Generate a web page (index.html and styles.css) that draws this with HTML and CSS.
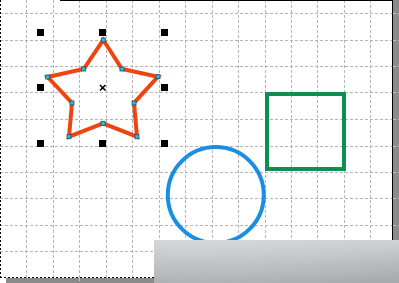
FILE: index.html
```html
<!DOCTYPE html>
<html>
<head>
<meta charset="utf-8">
<link rel="stylesheet" href="styles.css">
</head>
<body>
<div class="stage">
  <svg class="canvas" width="399" height="283" viewBox="0 0 399 283">
    <rect class="paper" x="0" y="0" width="393" height="278"/>
    <g class="grid">
      <line x1="26.5" y1="0" x2="26.5" y2="278"/>
      <line x1="53.5" y1="0" x2="53.5" y2="278"/>
      <line x1="79.5" y1="0" x2="79.5" y2="278"/>
      <line x1="106.5" y1="0" x2="106.5" y2="278"/>
      <line x1="132.5" y1="0" x2="132.5" y2="278"/>
      <line x1="159.5" y1="0" x2="159.5" y2="278"/>
      <line x1="185.5" y1="0" x2="185.5" y2="278"/>
      <line x1="212.5" y1="0" x2="212.5" y2="278"/>
      <line x1="238.5" y1="0" x2="238.5" y2="278"/>
      <line x1="265.5" y1="0" x2="265.5" y2="278"/>
      <line x1="291.5" y1="0" x2="291.5" y2="278"/>
      <line x1="317.5" y1="0" x2="317.5" y2="278"/>
      <line x1="344.5" y1="0" x2="344.5" y2="278"/>
      <line x1="370.5" y1="0" x2="370.5" y2="278"/>
      <line x1="0" y1="13.5" x2="393" y2="13.5"/>
      <line x1="0" y1="40.5" x2="393" y2="40.5"/>
      <line x1="0" y1="66.5" x2="393" y2="66.5"/>
      <line x1="0" y1="92.5" x2="393" y2="92.5"/>
      <line x1="0" y1="119.5" x2="393" y2="119.5"/>
      <line x1="0" y1="146.5" x2="393" y2="146.5"/>
      <line x1="0" y1="172.5" x2="393" y2="172.5"/>
      <line x1="0" y1="198.5" x2="393" y2="198.5"/>
      <line x1="0" y1="225.5" x2="393" y2="225.5"/>
      <line x1="0" y1="251.5" x2="393" y2="251.5"/>
    </g>
    <rect class="shadow" x="393" y="0" width="6" height="283"/>
    <rect class="shadow" x="6" y="278" width="393" height="5"/>
    <g class="ticks">
      <line x1="393" y1="13.5" x2="399" y2="13.5"/>
      <line x1="393" y1="40.5" x2="399" y2="40.5"/>
      <line x1="393" y1="66.5" x2="399" y2="66.5"/>
      <line x1="393" y1="92.5" x2="399" y2="92.5"/>
      <line x1="393" y1="119.5" x2="399" y2="119.5"/>
      <line x1="393" y1="146.5" x2="399" y2="146.5"/>
      <line x1="393" y1="172.5" x2="399" y2="172.5"/>
      <line x1="393" y1="198.5" x2="399" y2="198.5"/>
      <line x1="393" y1="225.5" x2="399" y2="225.5"/>
      <line x1="79.5" y1="278" x2="79.5" y2="283"/>
    </g>
    <line class="edge-solid" x1="60" y1="0.5" x2="392.5" y2="0.5"/>
    <line class="edge-solid" x1="392.5" y1="0" x2="392.5" y2="278"/>
    <line class="edge-dash" x1="0.5" y1="0" x2="0.5" y2="278"/>
    <line class="edge-dash" x1="0" y1="277.5" x2="393" y2="277.5"/>

    <rect class="square" x="267" y="94" width="77" height="75"/>
    <circle class="circle" cx="215.8" cy="195" r="48"/>

    <polygon class="star" points="103.3,40 122,69 158,76.7 134,103 137,136.7 103,123.3 69,136.7 72,103 47.7,77 83.7,69"/>
    <g class="nodes">
      <rect x="101.3" y="38" width="4" height="4"/>
      <rect x="120" y="67" width="4" height="4"/>
      <rect x="156" y="74.7" width="4" height="4"/>
      <rect x="132" y="101" width="4" height="4"/>
      <rect x="135" y="134.7" width="4" height="4"/>
      <rect x="101" y="121.3" width="4" height="4"/>
      <rect x="67" y="134.7" width="4" height="4"/>
      <rect x="70" y="101" width="4" height="4"/>
      <rect x="45.7" y="75" width="4" height="4"/>
      <rect x="81.7" y="67" width="4" height="4"/>
    </g>
    <g class="handles">
      <rect x="37" y="29" width="7" height="7"/>
      <rect x="99" y="29" width="7" height="7"/>
      <rect x="161" y="29" width="7" height="7"/>
      <rect x="37" y="84" width="7" height="7"/>
      <rect x="161" y="84" width="7" height="7"/>
      <rect x="37" y="140" width="7" height="7"/>
      <rect x="99" y="140" width="7" height="7"/>
      <rect x="161" y="140" width="7" height="7"/>
    </g>
    <g class="center">
      <line x1="100" y1="85" x2="105.5" y2="90.5"/>
      <line x1="105.5" y1="85" x2="100" y2="90.5"/>
    </g>
  </svg>
  <div class="overlay"></div>
</div>
</body>
</html>
```
FILE: styles.css
```css
html, body {
  margin: 0;
  padding: 0;
  background: #ffffff;
  font-family: "Liberation Sans", Arial, sans-serif;
}
.stage {
  position: relative;
  width: 399px;
  height: 283px;
  overflow: hidden;
  background: #ffffff;
}
.canvas {
  display: block;
}
.paper {
  fill: #ffffff;
}
.grid line {
  stroke: #b4b4b4;
  stroke-width: 1;
  stroke-dasharray: 3 2;
}
.shadow {
  fill: #8a8a8a;
}
.ticks line {
  stroke: #c8c8c8;
  stroke-width: 1;
  stroke-dasharray: 3 2;
}
.edge-solid {
  stroke: #000000;
  stroke-width: 1;
}
.edge-dash {
  stroke: #000000;
  stroke-width: 1;
  stroke-dasharray: 2 2;
}
.square {
  fill: none;
  stroke: #0d8f4f;
  stroke-width: 4;
}
.circle {
  fill: none;
  stroke: #1a8fe2;
  stroke-width: 4;
}
.star {
  fill: none;
  stroke: #ee4411;
  stroke-width: 4;
  stroke-linejoin: miter;
}
.nodes rect {
  fill: #25c0e6;
  stroke: #1b4e6a;
  stroke-width: 0.8;
}
.handles rect {
  fill: #000000;
}
.center line {
  stroke: #000000;
  stroke-width: 1.6;
}
.overlay {
  position: absolute;
  left: 154px;
  top: 240px;
  width: 245px;
  height: 43px;
  background:
    radial-gradient(ellipse 260px 90px at 40px -20px, rgba(220, 225, 228, 0.55) 0%, rgba(220, 225, 228, 0) 100%),
    radial-gradient(circle 90px at 300px 110px, rgba(150, 152, 153, 0.7) 60%, rgba(150, 152, 153, 0) 62%),
    linear-gradient(to bottom, #cdd1d3 0%, #b6b9ba 55%, #a6a8a9 100%);
}
```
